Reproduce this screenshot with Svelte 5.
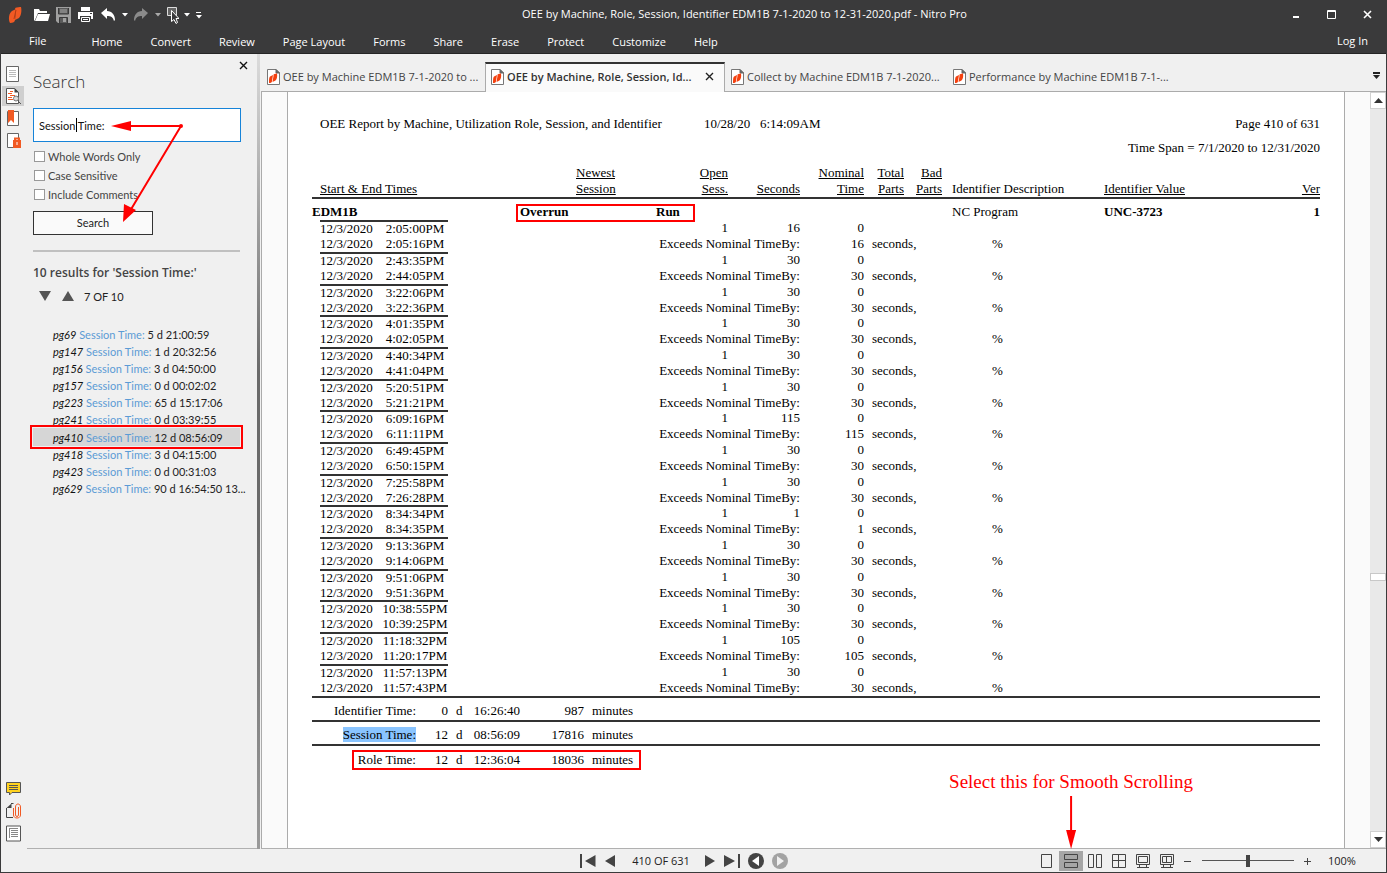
<script lang="ts">
	let query = $state('Session Time:');
	let wholeWords = $state(false);
	let caseSensitive = $state(false);
	let includeComments = $state(false);
	let current = $state(6);
	let viewMode = $state('continuous');
	let zoom = $state(100);

	const menu = ['Home', 'Convert', 'Review', 'Page Layout', 'Forms', 'Share', 'Erase', 'Protect', 'Customize', 'Help'];

	const tabs = [
		{ title: 'OEE by Machine EDM1B 7-1-2020 to ...', active: false },
		{ title: 'OEE by Machine, Role, Session, Id...', active: true },
		{ title: 'Collect by Machine EDM1B 7-1-2020...', active: false },
		{ title: 'Performance by Machine EDM1B 7-1-...', active: false }
	];

	const results = [
		{ page: 69, text: '5 d 21:00:59' },
		{ page: 147, text: '1 d 20:32:56' },
		{ page: 156, text: '3 d 04:50:00' },
		{ page: 157, text: '0 d 00:02:02' },
		{ page: 223, text: '65 d 15:17:06' },
		{ page: 241, text: '0 d 03:39:55' },
		{ page: 410, text: '12 d 08:56:09' },
		{ page: 418, text: '3 d 04:15:00' },
		{ page: 423, text: '0 d 00:31:03' },
		{ page: 629, text: '90 d 16:54:50 13...' }
	];

	const sessions = [
		{ start: '2:05:00PM', end: '2:05:16PM', seconds: 16 },
		{ start: '2:43:35PM', end: '2:44:05PM', seconds: 30 },
		{ start: '3:22:06PM', end: '3:22:36PM', seconds: 30 },
		{ start: '4:01:35PM', end: '4:02:05PM', seconds: 30 },
		{ start: '4:40:34PM', end: '4:41:04PM', seconds: 30 },
		{ start: '5:20:51PM', end: '5:21:21PM', seconds: 30 },
		{ start: '6:09:16PM', end: '6:11:11PM', seconds: 115 },
		{ start: '6:49:45PM', end: '6:50:15PM', seconds: 30 },
		{ start: '7:25:58PM', end: '7:26:28PM', seconds: 30 },
		{ start: '8:34:34PM', end: '8:34:35PM', seconds: 1 },
		{ start: '9:13:36PM', end: '9:14:06PM', seconds: 30 },
		{ start: '9:51:06PM', end: '9:51:36PM', seconds: 30 },
		{ start: '10:38:55PM', end: '10:39:25PM', seconds: 30 },
		{ start: '11:18:32PM', end: '11:20:17PM', seconds: 105 },
		{ start: '11:57:13PM', end: '11:57:43PM', seconds: 30 }
	];

	const totals = [
		{ label: 'Identifier Time:', days: 0, time: '16:26:40', minutes: 987 },
		{ label: 'Session Time:', days: 12, time: '08:56:09', minutes: 17816, found: true },
		{ label: 'Role Time:', days: 12, time: '12:36:04', minutes: 18036, boxed: true }
	];

	const views = ['single', 'continuous', 'facing', 'facing-continuous', 'fullscreen', 'fullscreen-facing'];

	let scrollTop = $derived((410 / 631) * 99);

	function step(by: number) {
		current = (current + by + results.length) % results.length;
	}
</script>

{#snippet docIcon()}
	<svg width="13" height="16" viewBox="0 0 13 16" aria-hidden="true">
		<path d="M.5.500h8.500l3.500 3.500v11.500H.500z" fill="#fff" stroke="#777" />
		<path d="M9 .500v3.500h3.500z" fill="#666" stroke="#666" />
		<path d="M3 7.500 6 6 5 12c0 1.500-1 2-3 2 0-3 0-5.500 1-6.500z" fill="#f4400f" />
		<path d="M6.500 5.500C8 4.500 9 4.500 10 4.500c.500 3 0 5.500-1.500 7L5.500 13l1-6z" fill="#f4400f" />
	</svg>
{/snippet}

<div class="window">
	<header class="chrome">
		<div class="title-bar">
			<div class="quick">
				<svg class="logo" width="14" height="18" viewBox="0 0 14 18" aria-hidden="true">
					<path d="M4 5 8 3 7 14c0 2-2 3-5 3C0 13 1 7 4 5z" fill="#f15a24" />
					<path d="M7 2c2-1 5-1 6-1 1 4 0 9-2 11l-4 2 1-9z" fill="#f15a24" />
					<path d="M8 4 6 13" stroke="#b93a10" fill="none" />
				</svg>
				<button aria-label="Open">
					<svg width="18" height="16" viewBox="0 0 18 16"><path d="M1 14V2h5l1 2h7v2H5L2 13z" fill="#fff" /><path d="M5 7h12l-2 7H2z" fill="#fff" /></svg>
				</button>
				<button aria-label="Save">
					<svg width="18" height="16" viewBox="0 0 18 16"><path d="M1 0h15v16H3l-2-2z" fill="#a0a0a0" /><path d="M3.500 1v6h10V1M4.500 16v-5.500h8V16" fill="#5a5a5a" stroke="#3a3a3b" /><path d="M5 3h7M5 5h7" stroke="#aaa" /><path d="M8 11h3v4H8z" fill="#a0a0a0" /></svg>
				</button>
				<button aria-label="Print">
					<svg width="18" height="16" viewBox="0 0 18 16"><path d="M4 0h9v4H4z" fill="#fff" /><path d="M1 5h15v7h-2V9H3v3H1z" fill="#fff" /><path d="M4.500 10.500h8v4h-8z" fill="none" stroke="#fff" /><path d="M6 12.500h5" stroke="#fff" /><path d="M13 6h2v1h-2z" fill="#3a3a3b" /></svg>
				</button>
				<button aria-label="Undo">
					<svg width="18" height="16" viewBox="0 0 18 16"><path d="M2 6 8 1v3c5 0 8 4 8 9l-1 1c-1-4-3-5-7-5v3z" fill="#fff" /></svg>
				</button>
				<button aria-label="Undo history">
					<svg width="8" height="16" viewBox="0 0 8 16"><path d="M1 6h6L4 9.500z" fill="#fff" /></svg>
				</button>
				<button aria-label="Redo">
					<svg width="18" height="16" viewBox="0 0 18 16"><path d="M15 6 9 1v3c-5 0-8 4-8 9l1 1c1-4 3-5 7-5v3z" fill="#8b8b8b" /></svg>
				</button>
				<button aria-label="Redo history">
					<svg width="8" height="16" viewBox="0 0 8 16"><path d="M0 6h6L3 9.500z" fill="#aaa" /></svg>
				</button>
				<button aria-label="Select tool">
					<svg width="12" height="18" viewBox="0 0 12 18"><path d="M.5 1.500h9v8h-9z" fill="#666" stroke="#ddd" /><path d="M4.500 4.500v11l2.500-2 2 4 1.500-1-1.500-4h3z" fill="#3a3a3b" stroke="#fff" /></svg>
				</button>
				<button aria-label="Tool list">
					<svg width="8" height="16" viewBox="0 0 8 16"><path d="M1 6h6L4 9.500z" fill="#fff" /></svg>
				</button>
				<button aria-label="Customize toolbar">
					<svg width="8" height="16" viewBox="0 0 8 16"><path d="M1 5.500h5" stroke="#fff" /><path d="M1 8h6l-3 3.500z" fill="#fff" /></svg>
				</button>
			</div>
			<h1>OEE by Machine, Role, Session, Identifier EDM1B 7-1-2020 to 12-31-2020.pdf - Nitro Pro</h1>
			<div class="window-buttons">
				<button aria-label="Minimize"><svg width="12" height="12" viewBox="0 0 12 12"><path d="M3 8h6" stroke="#fff" stroke-width="2" /></svg></button>
				<button aria-label="Maximize"><svg width="12" height="12" viewBox="0 0 12 12"><path d="M1.500 1.500h8v8h-8zM1.500 2.500h8" fill="none" stroke="#fff" /></svg></button>
				<button aria-label="Close"><svg width="12" height="12" viewBox="0 0 12 12"><path d="m2 2 7 7M9 2 2 9" stroke="#fff" stroke-width="1.600" /></svg></button>
			</div>
		</div>
		<nav class="menu">
			<button class="file">File</button>
			{#each menu as item}
				<button class="item">{item}</button>
			{/each}
			<button class="login">Log In</button>
		</nav>
	</header>

	<div class="body">
		<aside class="rail">
			<button aria-label="Pages">
				<svg width="14" height="17" viewBox="0 0 14 17"><path d="M.5.500h12v15H.5z" fill="#fff" stroke="#666" /><path d="M3 4.500h7M3 6.500h7M3 8.500h7M3 10.500h7" stroke="#bbb" /></svg>
			</button>
			<button class="on" aria-label="Search">
				<svg width="15" height="17" viewBox="0 0 15 17"><path d="M.5.500h8l4 4v11H.5z" fill="#fff" stroke="#555" /><path d="M8.500 0v4.500H13z" fill="#444" /><path d="M4 3.500h3M2 5.500h4M4 7.500h5M2 9.500h4M2 11.500h5" stroke="#f15a24" /><circle cx="10" cy="10.500" r="2.500" fill="#ddd" stroke="#777" /><path d="m12 13 3 3" stroke="#555" /></svg>
			</button>
			<button aria-label="Bookmarks">
				<svg width="14" height="17" viewBox="0 0 14 17"><path d="M1.500 1.500h11v14h-11z" fill="#fff" stroke="#666" /><path d="M2 0h6v13l-3-3-3 3z" fill="#f15a24" /></svg>
			</button>
			<button aria-label="Security">
				<svg width="15" height="17" viewBox="0 0 15 17"><path d="M1.500 1.500h11v14h-11z" fill="#fff" stroke="#666" /><path d="M7 8h8v8H7z" fill="#f15a24" /><path d="M9 9V6.500h4V9" fill="none" stroke="#f15a24" stroke-width="2" /><path d="M11 10v3" stroke="#fff" /></svg>
			</button>
			<button class="lower" aria-label="Comments">
				<svg width="15" height="15" viewBox="0 0 15 15"><path d="M.5.500h14v10H6L3.500 13v-2.500h-3z" fill="#ffd21f" stroke="#555" /><path d="M3 3.500h9M3 5.500h9M3 7.500h9" stroke="#555" /></svg>
			</button>
			<button aria-label="Attachments">
				<svg width="15" height="16" viewBox="0 0 15 16"><path d="M5 .500h2.500M.500 5v9.500H7" fill="none" stroke="#444" /><path d="M5.500.500v4.500H.500z" fill="#444" /><path d="M7.500 5v7c0 4 7 4 7 0V4c0-4-5-4-5 0v8c0 2 3 2 3 0V4" fill="none" stroke="#f15a24" /></svg>
			</button>
			<button aria-label="Output">
				<svg width="15" height="17" viewBox="0 0 15 17"><path d="M.5 1h14v15H.5z" fill="#fff" stroke="#555" /><path d="M3 3.500h9M5 5.500h7M5 7.500h7M5 9.500h7M5 11.500h7M3.500 3v10" stroke="#888" /></svg>
			</button>
		</aside>

		<section class="search">
			<button class="close" aria-label="Close search">
				<svg width="9" height="9" viewBox="0 0 9 9"><path d="m1 1 7 7M8 1 1 8" stroke="#111" stroke-width="1.400" /></svg>
			</button>
			<h2>Search</h2>
			<div class="field">
				<input type="text" aria-label="Search text" bind:value={query} />
				<span class="caret"></span>
			</div>
			<label class="check"><input type="checkbox" bind:checked={wholeWords} />Whole Words Only</label>
			<label class="check"><input type="checkbox" bind:checked={caseSensitive} />Case Sensitive</label>
			<label class="check"><input type="checkbox" bind:checked={includeComments} />Include Comments</label>
			<button class="go">Search</button>
			<hr />
			<h3>10 results for 'Session Time:'</h3>
			<div class="stepper">
				<button aria-label="Next result" onclick={() => step(1)}>
					<svg width="14" height="12" viewBox="0 0 14 12"><path d="M1 0h12L7 10z" fill="#555" /></svg>
				</button>
				<button aria-label="Previous result" onclick={() => step(-1)}>
					<svg width="14" height="12" viewBox="0 0 14 12"><path d="M1 10h12L7 0z" fill="#555" /></svg>
				</button>
				<span>{current + 1} OF {results.length}</span>
			</div>
			<ul class="results">
				{#each results as result, i}
					<li class:current={i === current}>
						<button onclick={() => (current = i)}><em>pg{result.page}</em> <span>Session Time:</span> {result.text}</button>
					</li>
				{/each}
			</ul>

			<!-- arrows pointing at the text box and the button -->
			<svg class="arrows" width="80" height="104" viewBox="0 0 80 104" aria-hidden="true">
				<path d="M71 6H16M71 6 20 91" stroke="#f00" stroke-width="2" fill="none" />
				<path d="M1 6l20-5v10zM13 102l1-18 12 6z" fill="#f00" />
				<circle cx="71" cy="6" r="2" fill="#f00" />
			</svg>
		</section>

		<div class="splitter"></div>

		<main class="document">
			<div class="tabs">
				{#each tabs as tab}
					<div class="tab" class:active={tab.active}>
						{@render docIcon()}
						<a href="#page">{tab.title}</a>
						{#if tab.active}
							<button aria-label="Close tab">
								<svg width="9" height="9" viewBox="0 0 9 9"><path d="m1 1 7 7M8 1 1 8" stroke="#222" stroke-width="1.400" /></svg>
							</button>
						{/if}
					</div>
				{/each}
				<button class="tab-list" aria-label="Tab list">
					<svg width="9" height="9" viewBox="0 0 9 9"><path d="M1 1h7v2H1z" fill="#222" /><path d="M1 4h7L4.500 8z" fill="#222" /></svg>
				</button>
			</div>

			<div class="viewport">
				<article class="page" id="page">
					<div class="report-head">
						<span>OEE Report by Machine, Utilization Role, Session, and Identifier</span>
						<span class="printed">10/28/20 &nbsp; 6:14:09AM</span>
						<span class="page-no">Page 410 of 631</span>
					</div>
					<p class="span">Time Span = 7/1/2020 to 12/31/2020</p>

					<table class="report">
						<colgroup>
							<col class="c-time" /><col class="c-session" /><col class="c-open" /><col class="c-seconds" /><col class="c-nominal" />
							<col class="c-total" /><col class="c-bad" /><col class="c-desc" /><col class="c-value" /><col />
						</colgroup>
						<thead>
							<tr>
								<th class="indent">Start &amp; End Times</th>
								<th class="newest">Newest<br />Session</th>
								<th class="num">Open<br />Sess.</th>
								<th class="num">Seconds</th>
								<th class="num">Nominal<br />Time</th>
								<th class="num">Total<br />Parts</th>
								<th class="num">Bad<br />Parts</th>
								<th class="desc plain">Identifier Description</th>
								<th>Identifier Value</th>
								<th class="num">Ver</th>
							</tr>
						</thead>
						<tbody>
							<tr class="machine">
								<td><b>EDM1B</b></td>
								<td class="boxed"><b>Overrun</b><span class="mark role-mark"></span></td>
								<td><b>Run</b></td>
								<td colspan="4"></td>
								<td class="desc">NC Program</td>
								<td><b>UNC-3723</b></td>
								<td class="num"><b>1</b></td>
							</tr>
						</tbody>
						{#each sessions as s, i}
							<tbody class:tight={i % 3 === 2}>
								<tr class="start">
									<td><div class="stamp"><span>12/3/2020</span><span class="clock">{s.start}</span></div></td>
									<td></td>
									<td class="num">1</td>
									<td class="num">{s.seconds}</td>
									<td class="num">0</td>
									<td colspan="5"></td>
								</tr>
								<tr class="end">
									<td><div class="stamp"><span>12/3/2020</span><span class="clock">{s.end}</span></div></td>
									<td></td>
									<td class="num" colspan="2">Exceeds Nominal TimeBy:</td>
									<td class="num">{s.seconds}</td>
									<td class="unit" colspan="2">seconds,</td>
									<td class="percent">%</td>
									<td colspan="2"></td>
								</tr>
							</tbody>
						{/each}
					</table>

					<table class="totals">
						<colgroup>
							<col class="t-label" /><col class="t-days" /><col class="t-d" /><col class="t-time" /><col class="t-minutes" /><col />
						</colgroup>
						<tbody>
							{#each totals as t}
								<tr>
									<td class="num boxed">
										<span class:found={t.found}>{t.label}</span>
										{#if t.boxed}<span class="mark total-mark"></span>{/if}
									</td>
									<td class="num">{t.days}</td>
									<td class="d">d</td>
									<td class="num">{t.time}</td>
									<td class="num">{t.minutes}</td>
									<td class="unit">minutes</td>
								</tr>
							{/each}
						</tbody>
					</table>
				</article>

				<div class="scrollbar">
					<button aria-label="Scroll up"><svg width="9" height="5" viewBox="0 0 9 5"><path d="M0 5h9L4.500 0z" fill="#333" /></svg></button>
					<div class="track"><div class="thumb" style="top: {scrollTop}%"></div></div>
					<button aria-label="Scroll down"><svg width="9" height="5" viewBox="0 0 9 5"><path d="M0 0h9L4.500 5z" fill="#333" /></svg></button>
				</div>
			</div>
		</main>
	</div>

	<footer class="status">
		<div class="pager">
			<button aria-label="First page"><svg width="16" height="14" viewBox="0 0 16 14"><path d="M0 0h2v14H0zM15.500 1v12L5 7z" fill="#444" /></svg></button>
			<button aria-label="Previous page"><svg width="12" height="14" viewBox="0 0 12 14"><path d="M11 1v12L1 7z" fill="#444" /></svg></button>
			<span>410 OF 631</span>
			<button aria-label="Next page"><svg width="12" height="14" viewBox="0 0 12 14"><path d="M1 1v12l10-6z" fill="#444" /></svg></button>
			<button aria-label="Last page"><svg width="16" height="14" viewBox="0 0 16 14"><path d="M14 0h2v14h-2zM0 1v12l11-6z" fill="#444" /></svg></button>
			<button aria-label="Previous view"><svg width="16" height="16" viewBox="0 0 16 16"><circle cx="8" cy="8" r="8" fill="#444" /><path d="M11 3v10L4 8z" fill="#fff" /></svg></button>
			<button aria-label="Next view"><svg width="16" height="16" viewBox="0 0 16 16"><circle cx="8" cy="8" r="8" fill="#a3a3a3" /><path d="M5 3v10l7-5z" fill="#f0f0f0" /></svg></button>
		</div>
		<div class="tools">
			{#each views as view}
				<button class="view" class:on={view === viewMode} aria-label={view} onclick={() => (viewMode = view)}>
					<svg width="14" height="14" viewBox="0 0 14 14" fill="none" stroke="#444">
						{#if view === 'single'}
							<path d="M1.500.500h10v13h-10z" />
						{:else if view === 'continuous'}
							<path d="M.5.500h13v5H.500zM.500 8.500h13v5H.500z" />
						{:else if view === 'facing'}
							<path d="M.500.500h5v13h-5zM8.500.500h5v13h-5z" />
						{:else if view === 'facing-continuous'}
							<path d="M.500.500h13v13H.500zM6.500.500v13M.500 6.500h13" />
						{:else if view === 'fullscreen'}
							<path d="M.500.500h13v10H.500zM2.500 2.500h9v6h-9zM3.500 10.500v3M10.500 10.500v3M1 13.500h12" />
						{:else}
							<path d="M.500.500h13v10H.500zM2.500 2.500h9v6h-9zM6.500 2.500v6M3.500 10.500v3M10.500 10.500v3M1 13.500h12" />
						{/if}
					</svg>
				</button>
				{#if view === 'continuous'}
					<div class="note">
						<span>Select this for Smooth Scrolling</span>
						<svg width="10" height="53" viewBox="0 0 10 53" aria-hidden="true"><path d="M5 0v40" stroke="#f00" stroke-width="2" /><path d="M0 34h10L5 53z" fill="#f00" /></svg>
					</div>
				{/if}
			{/each}
			<button class="zoom-step" aria-label="Zoom out" onclick={() => (zoom -= 10)}><svg width="8" height="8" viewBox="0 0 8 8"><path d="M0 4.500h7" stroke="#444" /></svg></button>
			<input class="zoom" type="range" min="0" max="200" aria-label="Zoom" bind:value={zoom} />
			<button class="zoom-step" aria-label="Zoom in" onclick={() => (zoom += 10)}><svg width="8" height="8" viewBox="0 0 8 8"><path d="M0 4.500h7M3.500 1v7" stroke="#444" /></svg></button>
			<span class="zoom-value">{zoom}%</span>
		</div>
	</footer>
</div>

<style>
	:global(body) {
		background: #f0f0f0;
	}

	.window {
		box-sizing: border-box;
		display: flex;
		flex-direction: column;
		min-height: 100vh;
		border: 1px solid #3a3a3b;
		border-top: 0;
		background: #f0f0f0;
		color: #222;
		font-family: 'Open Sans', 'Noto Sans', sans-serif;
		font-size: 11px;
		line-height: 16px;
	}

	button {
		display: flex;
		align-items: center;
		justify-content: center;
		padding: 0;
		border: 0;
		background: none;
		color: inherit;
		font: inherit;
		white-space: nowrap;
	}

	svg {
		display: block;
		flex: none;
	}

	h1,
	h2,
	h3,
	p,
	ul {
		margin: 0;
		padding: 0;
		font-weight: 400;
	}

	.chrome {
		background: #3a3a3b;
		color: #fff;
		border-bottom: 1px solid #252525;
	}

	.title-bar {
		display: flex;
		align-items: center;
		height: 29px;
	}

	.quick {
		display: flex;
		align-items: center;
		gap: 4px;
		padding-left: 7px;
	}

	.logo {
		margin-right: 7px;
	}

	.title-bar h1 {
		flex: 1;
		padding: 0 0 1px 8px;
		font-size: 11px;
		text-align: center;
	}

	.window-buttons {
		display: flex;
		gap: 24px;
		padding: 0 12px;
	}

	.menu {
		display: flex;
		align-items: center;
		gap: 28px;
		height: 24px;
		padding: 0 18px 0 28px;
	}

	.file {
		margin-right: 17px;
	}

	.item {
		padding-top: 2px;
	}

	.login {
		margin-left: auto;
	}

	.body {
		display: flex;
		flex: 1;
	}

	.rail {
		display: flex;
		flex-direction: column;
		gap: 2px;
		width: 26px;
		padding: 10px 0 6px;
		box-sizing: border-box;
	}

	.rail button {
		width: 22px;
		height: 20px;
		margin-left: 1px;
	}

	.rail .on {
		background: #cfcfcf;
	}

	.rail .lower {
		margin-top: auto;
	}

	.search {
		position: relative;
		box-sizing: border-box;
		width: 230px;
		padding: 7px 17px 0 6px;
		border-bottom: 1px solid #b0b0b0;
		font-family: Lato, 'Open Sans', sans-serif;
	}

	.close {
		margin: 0 0 0 auto;
		position: relative;
		left: 8px;
	}

	.search h2 {
		margin-top: 1px;
		font-family: 'Open Sans', sans-serif;
		font-size: 17px;
		font-weight: 300;
		line-height: 22px;
		color: #333;
	}

	.field {
		position: relative;
		margin: 15px 0 5px;
	}

	.field input {
		box-sizing: border-box;
		display: block;
		width: 208px;
		height: 34px;
		padding: 0 5px;
		border: 1px solid #1683d8;
		background: #fff;
		color: #111;
		font: inherit;
	}

	.caret {
		position: absolute;
		left: 43px;
		top: 10px;
		width: 1px;
		height: 14px;
		background: #000;
	}

	.check {
		display: flex;
		align-items: center;
		gap: 3px;
		height: 19px;
		padding-left: 1px;
		color: #444;
	}

	.check input {
		appearance: none;
		box-sizing: border-box;
		width: 11px;
		height: 11px;
		margin: 0;
		border: 1px solid #999;
		background: #fff;
	}

	.go {
		box-sizing: border-box;
		width: 120px;
		height: 24px;
		margin-top: 7px;
		border: 1px solid #333;
		background: #fafafa;
	}

	.search hr {
		height: 2px;
		margin: 15px 0 12px;
		border: 0;
		background: #c0c0c0;
	}

	.search h3 {
		font-family: 'Open Sans', sans-serif;
		font-size: 12px;
		font-weight: 600;
		line-height: 18px;
		color: #444;
	}

	.stepper {
		display: flex;
		align-items: center;
		gap: 9px;
		padding: 7px 0 0 5px;
	}

	.results {
		margin-top: 21px;
		list-style: none;
	}

	.results button {
		line-height: 17px;
		display: block;
		padding-left: 20px;
	}

	.results .current {
		padding-top: 1px;
		background: #d6d6d6;
		outline: 2px solid #f00;
		outline-offset: 1px;
	}

	.results em {
		color: #111;
	}

	.results span {
		color: #5b9bd5;
	}

	.arrows {
		position: absolute;
		left: 83px;
		top: 66px;
	}

	.splitter {
		width: 3px;
		margin-right: 1px;
		background: linear-gradient(#dcdcdc, #6a6a6a 40%, #6a6a6a 60%, #9a9a9a);
	}

	.document {
		display: flex;
		flex: 1;
		flex-direction: column;
		min-width: 0;
	}

	.tabs {
		display: flex;
		align-items: flex-end;
		height: 38px;
		background: linear-gradient(#ababab, #ababab) bottom / 100% 1px no-repeat;
	}

	.tab {
		box-sizing: border-box;
		display: flex;
		align-items: center;
		gap: 3px;
		width: 222px;
		height: 30px;
		padding: 0 6px 1px;
	}

	.tab:first-child {
		width: 224px;
	}

	.tab a {
		color: #444;
		text-decoration: none;
		white-space: nowrap;
	}

	.tab.active {
		width: 240px;
		padding: 0 10px 3px 5px;
		border: 1px solid #ababab;
		border-width: 2px 1px 0;
		border-top-color: #333;
		background: #fafafa;
	}

	.tab.active a {
		flex: 1;
		color: #333;
		font-weight: 600;
	}

	.tab-list {
		align-self: center;
		margin: 4px 5px 0 auto;
	}

	.viewport {
		display: flex;
		flex: 1;
		border-left: 1px solid #ababab;
		border-bottom: 1px solid #b0b0b0;
		background: #fafafa;
	}

	.page {
		flex: 1;
		min-width: 0;
		margin: 0 25px;
		padding: 24px 24px 0;
		border: 1px solid #ababab;
		border-width: 0 1px;
		background: #fff;
		color: #000;
		font-family: 'Liberation Serif', serif;
		font-size: 13px;
	}

	.report-head {
		display: flex;
		padding-left: 8px;
	}

	.printed {
		margin-left: 42px;
	}

	.page-no {
		margin-left: auto;
	}

	.span {
		margin: 8px 0 9px;
		text-align: right;
	}

	table {
		width: 100%;
		border-collapse: collapse;
		table-layout: fixed;
	}

	th,
	td {
		padding: 0;
		font-weight: 400;
		text-align: left;
		white-space: nowrap;
	}

	th {
		vertical-align: bottom;
		text-decoration: underline;
	}

	.plain {
		text-decoration: none;
	}

	thead tr {
		border-bottom: 2px solid #333;
	}

	.c-time { width: 208px; }
	.c-session { width: 136px; }
	.c-open, .c-seconds { width: 72px; }
	.c-nominal { width: 64px; }
	.c-total { width: 40px; }
	.c-bad { width: 38px; }
	.c-desc { width: 162px; }
	.c-value { width: 120px; }

	.num {
		text-align: right;
	}

	.indent {
		padding-left: 8px;
	}

	.newest {
		padding-left: 56px;
	}

	.desc {
		padding-left: 10px;
	}

	.unit {
		padding-left: 8px;
	}

	.percent {
		padding-left: 50px;
	}

	.machine td {
		padding-top: 5px;
	}

	.stamp {
		display: flex;
		justify-content: space-between;
		width: 128px;
		margin-left: 8px;
	}

	.clock {
		width: 66px;
		text-align: center;
	}

	.start .stamp {
		border-top: 2px solid #333;
		line-height: 14px;
	}

	.tight .end td {
		line-height: 15px;
	}

	.boxed {
		position: relative;
	}

	.mark {
		position: absolute;
		box-sizing: border-box;
		border: 2px solid #f00;
	}

	.role-mark {
		left: -4px;
		top: 5px;
		width: 179px;
		height: 18px;
	}

	.total-mark {
		left: 40px;
		top: 4px;
		width: 289px;
		height: 20px;
	}

	.totals {
		margin-top: 1px;
	}

	.totals tr {
		height: 24px;
		border-top: 2px solid #333;
	}

	.totals td {
		padding-top: 4px;
	}

	.t-label { width: 104px; }
	.t-days { width: 32px; }
	.t-d { width: 24px; }
	.t-time { width: 48px; }
	.t-minutes { width: 64px; }

	.d {
		padding-left: 8px;
	}

	.found {
		background: #89c4ff;
	}

	.scrollbar {
		display: flex;
		flex-direction: column;
		width: 16px;
		background: #e9e9e9;
	}

	.scrollbar button {
		box-sizing: border-box;
		height: 17px;
		border: 1px solid #d0d0d0;
		background: #fff;
	}

	.track {
		position: relative;
		flex: 1;
	}

	.thumb {
		position: absolute;
		box-sizing: border-box;
		width: 16px;
		height: 8px;
		border: 1px solid #c8c8c8;
		background: #fff;
	}

	.status {
		display: grid;
		grid-template-columns: 1fr auto 1fr;
		align-items: center;
		height: 23px;
		padding-right: 19px;
	}

	.pager {
		grid-column: 2;
		display: flex;
		align-items: center;
		gap: 8px;
	}

	.pager span {
		margin: 0 6px 0 8px;
	}

	.tools {
		position: relative;
		display: flex;
		align-items: center;
		justify-self: end;
	}

	.view {
		width: 24px;
		height: 20px;
	}

	.view.on {
		background: #a6a6a6;
	}

	/* centred over the second view button */
	.note {
		position: absolute;
		left: 36px;
		bottom: 22px;
		display: flex;
		flex-direction: column;
		align-items: center;
		gap: 3px;
		transform: translateX(-50%);
		color: #f00;
		font-family: 'Liberation Serif', serif;
		font-size: 19px;
		line-height: 22px;
		white-space: nowrap;
	}

	.zoom-step {
		width: 18px;
		height: 20px;
	}

	.zoom {
		appearance: none;
		width: 92px;
		height: 12px;
		margin: 0 5px;
		background: linear-gradient(#555, #555) center / 100% 1px no-repeat;
	}

	.zoom::-webkit-slider-thumb {
		appearance: none;
		width: 4px;
		height: 12px;
		background: #444;
	}

	.zoom-value {
		width: 39px;
		margin-left: 11px;
	}
</style>
